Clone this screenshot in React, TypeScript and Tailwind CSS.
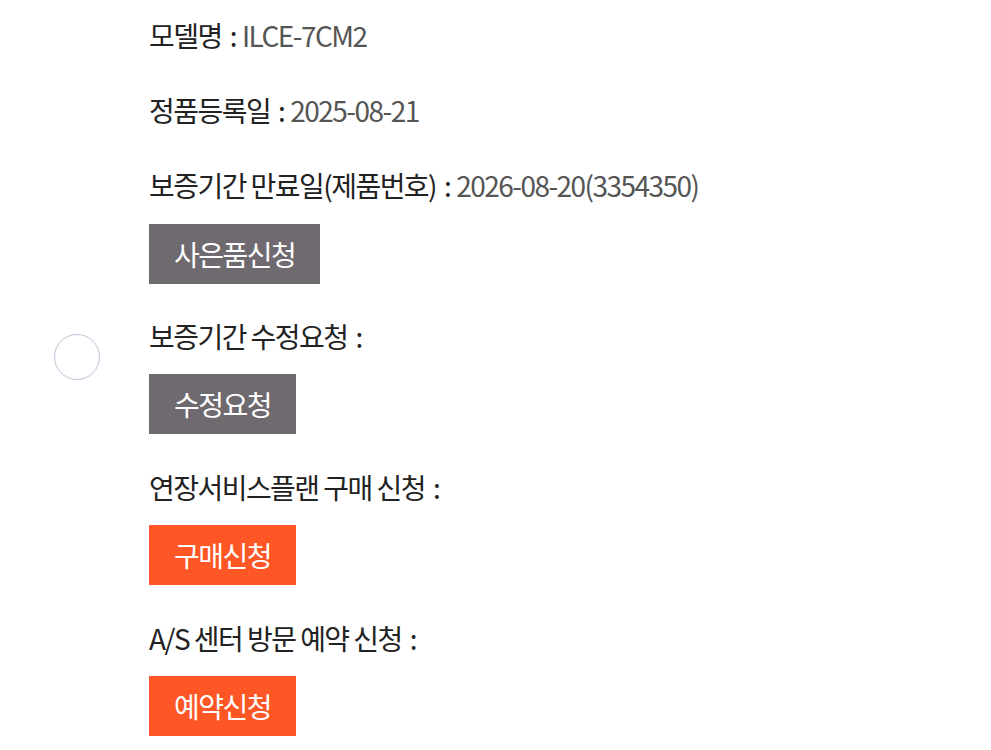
import React from 'react';

interface InfoRow {
  label: string;
  value?: string;
}

const font = { fontFamily: '"Noto Sans CJK KR", "Noto Sans", sans-serif' };

function Label({ label, value }: InfoRow) {
  return (
    <p className="text-[28px] leading-[36px] tracking-[-0.055em] text-[#222]">
      {label}
      <span className="ml-[8px] mr-[6px]">:</span>
      {value && <span className="text-[#555]">{value}</span>}
    </p>
  );
}

function ActionButton({ text, tone }: { text: string; tone: 'gray' | 'orange' }) {
  return (
    <button
      type="button"
      className={`h-[60px] px-[25px] text-[28px] tracking-[-0.055em] text-white ${
        tone === 'gray' ? 'bg-[#6e6a70]' : 'bg-[#fe5625]'
      }`}
    >
      {text}
    </button>
  );
}

export default function App() {
  return (
    <div className="relative min-h-[750px] bg-white" style={font}>
      <div className="flex flex-col items-start pl-[149px] pt-[17px]">
        <Label label="모델명" value="ILCE-7CM2" />
        <div className="mt-[39px]">
          <Label label="정품등록일" value="2025-08-21" />
        </div>
        <div className="mt-[39px]">
          <Label label="보증기간 만료일(제품번호)" value="2026-08-20(3354350)" />
        </div>
        <div className="mt-[21px]">
          <ActionButton text="사은품신청" tone="gray" />
        </div>
        <div className="mt-[34px]">
          <Label label="보증기간 수정요청" />
        </div>
        <div className="mt-[20px]">
          <ActionButton text="수정요청" tone="gray" />
        </div>
        <div className="mt-[35px]">
          <Label label="연장서비스플랜 구매 신청" />
        </div>
        <div className="mt-[20px]">
          <ActionButton text="구매신청" tone="orange" />
        </div>
        <div className="mt-[35px]">
          <Label label="A/S 센터 방문 예약 신청" />
        </div>
        <div className="mt-[20px]">
          <ActionButton text="예약신청" tone="orange" />
        </div>
      </div>
      <div className="absolute left-[54px] top-[334px] h-[46px] w-[46px] rounded-full border border-[#c3bfd6] bg-white" />
    </div>
  );
}
